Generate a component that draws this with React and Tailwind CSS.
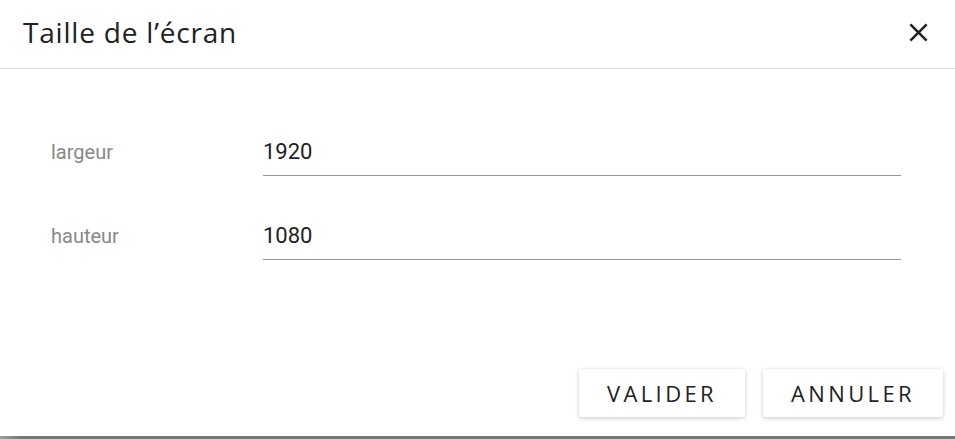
const FIELDS = [
  { label: "largeur", value: "1920" },
  { label: "hauteur", value: "1080" },
];

function CloseIcon() {
  return (
    <svg viewBox="0 0 24 24" className="w-[31px] h-[31px] text-[#222]" fill="currentColor">
      <path d="M19 6.41L17.59 5 12 10.59 6.41 5 5 6.41 10.59 12 5 17.59 6.41 19 12 13.41 17.59 19 19 17.59 13.41 12z" />
    </svg>
  );
}

function Field({ label, value }) {
  return (
    <div className="flex items-start">
      <div className="w-[212px] shrink-0 pt-[6px] text-[20px] leading-[28px] text-[#888] font-['Roboto',sans-serif]">
        {label}
      </div>
      <div className="flex-1 pt-[6px] pb-[9px] border-b border-[#949494] text-[22px] leading-[28px] text-[#222] font-['Roboto',sans-serif]">
        {value}
      </div>
    </div>
  );
}

export default function App() {
  return (
    <div className="w-[955px] h-[439px] bg-white flex flex-col overflow-hidden">
      <div className="h-[69px] shrink-0 border-b border-[#e0e0e0] flex items-center justify-between pl-[23px] pr-[21px]">
        <h1 className="pb-[4px] text-[28px] leading-[32px] text-[#222] font-['Open_Sans',sans-serif] tracking-[0.8px]">
          Taille de l’écran
        </h1>
        <button className="pb-[4px]">
          <CloseIcon />
        </button>
      </div>

      <div className="pt-[63px] pl-[51px] pr-[54px] flex flex-col gap-[40px]">
        {FIELDS.map((f) => (
          <Field key={f.label} label={f.label} value={f.value} />
        ))}
      </div>

      <div className="flex-1" />

      <div className="flex justify-end gap-[18px] pr-[12px] pb-[19px]">
        <button className="w-[166px] h-[48px] rounded-[3px] bg-white shadow-[0_1px_4px_rgba(0,0,0,0.22)] text-[22px] tracking-[3.4px] text-[#222] font-['Open_Sans',sans-serif]">
          VALIDER
        </button>
        <button className="w-[180px] h-[48px] rounded-[3px] bg-white shadow-[0_1px_4px_rgba(0,0,0,0.22)] text-[22px] tracking-[3.4px] text-[#222] font-['Open_Sans',sans-serif]">
          ANNULER
        </button>
      </div>

      <div className="h-[3px] shrink-0 bg-[linear-gradient(to_right,#a0a0a0,#777_20px)]" />
    </div>
  );
}
